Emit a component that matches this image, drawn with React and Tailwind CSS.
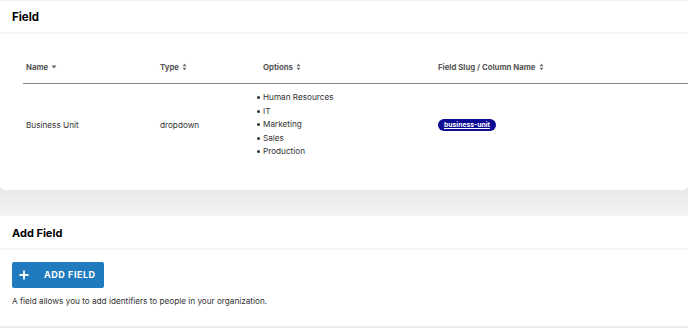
import React from "react";

const SortBoth = () => (
  <svg width="5" height="8" viewBox="0 0 5 8" className="inline-block ml-[3px] -mt-[1px]">
    <path d="M0.5 3.2 L2.5 0.8 L4.5 3.2 Z" fill="#666" />
    <path d="M0.5 4.8 L2.5 7.2 L4.5 4.8 Z" fill="#666" />
  </svg>
);
const SortDown = () => (
  <svg width="6" height="4" viewBox="0 0 6 4" className="inline-block ml-[3px] -mt-[1px]">
    <path d="M0.5 0.5 L5.5 0.5 L3 3.5 Z" fill="#666" />
  </svg>
);

export default function App() {
  return (
    <div className="w-[688px] h-[328px] overflow-hidden bg-[#efefef] text-[#333]" style={{ fontFamily: "Inter, 'Liberation Sans', sans-serif" }}>
      <div className="bg-white border-t border-[#f2f2f2] rounded-b-[5px] shadow-[0_1px_3px_rgba(0,0,0,0.06)] h-[190px]">
        <div className="h-[33px] flex items-center px-3 pt-[3px] border-b-2 border-[#f4f4f4]">
          <h2 className="text-[11.5px] font-bold text-black">Field</h2>
        </div>
        <div className="pl-[23px] pt-[24px]">
          <div className="grid grid-cols-[134px_103px_175px_1fr] border-b-[1.5px] border-[#8a8a8a] h-[26px] items-start text-[7.8px] font-bold text-[#555]">
            <div className="pl-[3px] pt-[4px]">Name<SortDown /></div>
            <div className="pl-[3px] pt-[4px]">Type<SortBoth /></div>
            <div className="pl-[3px] pt-[4px]">Options<SortBoth /></div>
            <div className="pl-[3px] pt-[4px]">Field Slug / Column Name<SortBoth /></div>
          </div>
          <div className="grid grid-cols-[134px_103px_175px_1fr] items-center text-[8.2px] pt-[7px]">
            <div className="pl-[3px]">Business Unit</div>
            <div className="pl-[3px]">dropdown</div>
            <ul className="pl-[3px] leading-[13.5px]">
              {["Human Resources", "IT", "Marketing", "Sales", "Production"].map((o) => (
                <li key={o} className="flex items-center -ml-[6px]">
                  <span className="w-[3px] h-[3px] rounded-full bg-[#333] mr-[3px]" />
                  {o}
                </li>
              ))}
            </ul>
            <div className="pl-[3px]">
              <span className="inline-block bg-[#0b0b94] text-white rounded-full px-[6px] text-[6.8px] font-bold underline leading-[12px]">business-unit</span>
            </div>
          </div>
        </div>
      </div>
      <div className="h-[26px] bg-gradient-to-b from-[#e9e9e9] to-[#f3f3f3]" />
      <div className="bg-white h-[112px] border-b-2 border-[#ececec]">
        <div className="h-[34px] flex items-center px-3 pt-[2px] border-b-2 border-[#f4f4f4]">
          <h2 className="text-[11px] font-bold text-black">Add Field</h2>
        </div>
        <div className="px-3 pt-[12px]">
          <button className="h-[26px] w-[92px] rounded-[2px] bg-[#1f7bbd] text-white flex items-center pl-[7px]">
            <svg width="10" height="10" viewBox="0 0 10 10">
              <path d="M5 0.5 V9.5 M0.5 5 H9.5" stroke="white" strokeWidth="1.8" />
            </svg>
            <span className="ml-[15px] text-[9px] font-bold tracking-[0.55px]">ADD FIELD</span>
          </button>
          <p className="text-[8.2px] mt-[7px] text-[#333]">A field allows you to add identifiers to people in your organization.</p>
        </div>
      </div>
    </div>
  );
}
